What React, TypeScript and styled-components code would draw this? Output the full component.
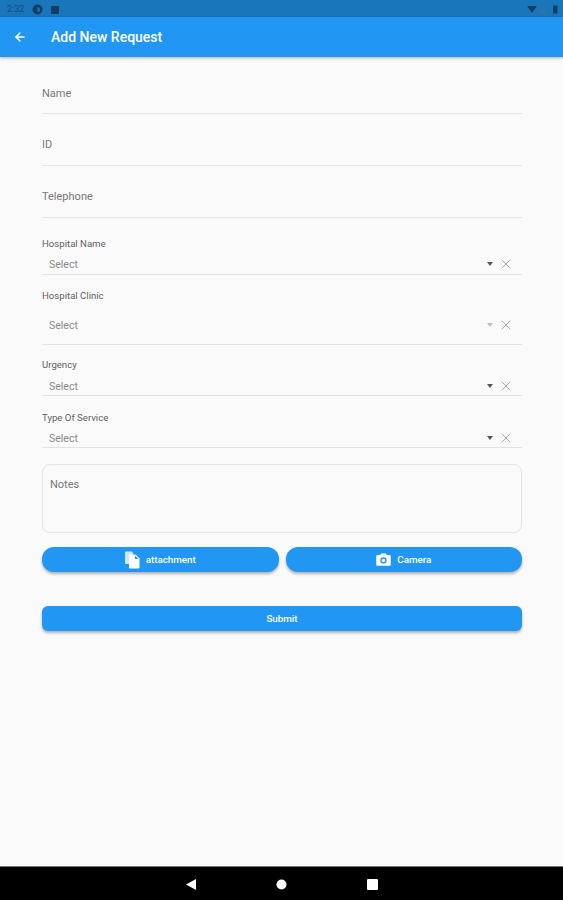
import React from "react";
import styled, { createGlobalStyle } from "styled-components";
import { ArrowLeft, X } from "lucide-react";

const GlobalStyle = createGlobalStyle`
	html, body {
		margin: 0;
		padding: 0;
		background: #fafafa;
	}
	* {
		box-sizing: border-box;
	}
`;

const Screen = styled.div`
	width: 563px;
	height: 900px;
	display: flex;
	flex-direction: column;
	background: #fafafa;
	font-family: Roboto, "Liberation Sans", sans-serif;
	overflow: hidden;
`;

const StatusBar = styled.div`
	height: 17px;
	flex: none;
	display: flex;
	align-items: center;
	justify-content: space-between;
	padding: 1px 5px 0 7px;
	background: #1a76bb;
`;

const StatusGroup = styled.div`
	display: flex;
	align-items: center;
	gap: 8px;
`;

const Clock = styled.span`
	font-size: 9px;
	color: #174a75;
`;

const AppBar = styled.header`
	height: 40px;
	flex: none;
	display: flex;
	align-items: center;
	padding: 0 0 1px 13px;
	background: #2196f3;
	color: #fff;
	box-shadow: 0 1px 3px rgba(0, 0, 0, 0.3);
	position: relative;
`;

const Title = styled.h1`
	margin: 0 0 0 24px;
	font-size: 14px;
	font-weight: 500;
`;

const Form = styled.main`
	flex: 1;
	padding: 0 41px 0 42px;
	display: flex;
	flex-direction: column;
`;

const TextField = styled.div<{ $first?: boolean }>`
	height: ${p => (p.$first ? 57 : 52)}px;
	padding-top: ${p => (p.$first ? 30 : 24)}px;
	border-bottom: 1px solid #e6e6e6;
	font-size: 11px;
	line-height: 13px;
	color: #777;
`;

const SelectField = styled.div<{ $top: number }>`
	margin-top: ${p => p.$top}px;
`;

const SelectLabel = styled.div`
	font-size: 9.6px;
	line-height: 11px;
	color: #616161;
`;

const SelectRow = styled.div<{ $height: number; $pad: number }>`
	height: ${p => p.$height}px;
	display: flex;
	align-items: center;
	padding: ${p => p.$pad}px 9px 0 7px;
	border-bottom: 1px solid #e2e2e2;
`;

const SelectText = styled.span`
	flex: 1;
	font-size: 10.5px;
	color: #8a8a8a;
`;

const Caret = styled.span<{ $disabled?: boolean }>`
	width: 0;
	height: 0;
	border-left: 3.5px solid transparent;
	border-right: 3.5px solid transparent;
	border-top: 4px solid ${p => (p.$disabled ? "#bdbdbd" : "#555")};
	margin-right: 5px;
`;

const ClearIcon = styled(X)`
	color: #a8a8a8;
	margin-right: -1px;
`;

const NotesBox = styled.div`
	height: 69px;
	margin-top: 16px;
	padding: 13px 7px;
	border: 1px solid #e4e4e4;
	border-radius: 8px;
	font-size: 11px;
	line-height: 13px;
	color: #777;
`;

const ButtonRow = styled.div`
	display: grid;
	grid-template-columns: 1fr 1fr;
	gap: 7px;
	margin-top: 14px;
`;

const PillButton = styled.button<{ $radius: number }>`
	height: 25px;
	display: flex;
	align-items: center;
	justify-content: center;
	gap: 6px;
	padding: 0;
	border: none;
	border-radius: ${p => p.$radius}px;
	background: #2196f3;
	color: #fff;
	font-family: inherit;
	font-size: 9.8px;
	font-weight: 500;
	box-shadow: 0 2px 3px rgba(0, 0, 0, 0.3);
`;

const SubmitButton = styled(PillButton)`
	width: 100%;
	margin-top: 34px;
`;

const NavBar = styled.nav`
	height: 34px;
	flex: none;
	display: flex;
	align-items: center;
	justify-content: center;
	gap: 80px;
	padding-top: 1px;
	background: #000;
	border-top: 1px solid #777;
`;

const NavIcon = styled.svg`
	display: block;
	fill: #fff;
`;

const CameraIcon = () => (
	<svg width="15" height="13" viewBox="0 0 16 14">
		<path
			fill="#fff"
			d="M5.5 0.5h5l1.2 1.7H14.5a1.3 1.3 0 0 1 1.3 1.3v9a1.3 1.3 0 0 1-1.3 1.3h-13A1.3 1.3 0 0 1 .2 12.5v-9a1.3 1.3 0 0 1 1.3-1.3h2.8z"
		/>
		<circle cx="8" cy="8" r="3.4" fill="#2196f3" />
		<circle cx="8" cy="8" r="1.9" fill="#fff" />
	</svg>
);

const FilesIcon = () => (
	<svg width="15" height="18" viewBox="0 0 15 18">
		<path fill="#cfe6fb" d="M1 0.5h6l1 1.5v11H1a1 1 0 0 1-1-1V1.5a1 1 0 0 1 1-1z" />
		<path fill="#fff" d="M5 3.5h5.5l4 4v9a1 1 0 0 1-1 1H5a1 1 0 0 1-1-1v-12a1 1 0 0 1 1-1z" />
		<path fill="#2196f3" d="M10 4.5v3.5h3.5z" />
	</svg>
);

const selects = [
	{ label: "Hospital Name", top: 20, height: 26, pad: 5 },
	{ label: "Hospital Clinic", top: 15, height: 44, pad: 5, disabled: true },
	{ label: "Urgency", top: 14, height: 26, pad: 7 },
	{ label: "Type Of Service", top: 16, height: 25, pad: 6 },
];

const App = () => {
	return (
		<Screen>
			<GlobalStyle />
			<StatusBar>
				<StatusGroup>
					<Clock>2:32</Clock>
					<svg width="11" height="11" viewBox="0 0 11 11">
						<circle cx="5.5" cy="5.5" r="5" fill="#0f3f66" />
						<path d="M5.5 3a2.5 2.5 0 0 1 0 5z" fill="#1a76bb" />
					</svg>
					<svg width="8" height="9" viewBox="0 0 8 9">
						<path d="M0 1h8v8H0z" fill="#0f3f66" />
					</svg>
				</StatusGroup>
				<svg width="31" height="9" viewBox="0 0 31 9">
					<path d="M0 1h10L5 8z" fill="#0f3f66" />
					<path d="M18 1v7h-6z" fill="#3f6f96" />
					<path d="M26 0.5h4.5v8H26z" fill="#0f3f66" />
				</svg>
			</StatusBar>
			<AppBar>
				<ArrowLeft size={14} strokeWidth={2.5} />
				<Title>Add New Request</Title>
			</AppBar>
			<Form>
				<TextField $first>Name</TextField>
				<TextField>ID</TextField>
				<TextField>Telephone</TextField>
				{selects.map(s => (
					<SelectField key={s.label} $top={s.top}>
						<SelectLabel>{s.label}</SelectLabel>
						<SelectRow $height={s.height} $pad={s.pad}>
							<SelectText>Select</SelectText>
							<Caret $disabled={s.disabled} />
							<ClearIcon size={16} strokeWidth={1.5} />
						</SelectRow>
					</SelectField>
				))}
				<NotesBox>Notes</NotesBox>
				<ButtonRow>
					<PillButton $radius={12}>
						<FilesIcon />
						attachment
					</PillButton>
					<PillButton $radius={12}>
						<CameraIcon />
						Camera
					</PillButton>
				</ButtonRow>
				<SubmitButton $radius={6}>Submit</SubmitButton>
			</Form>
			<NavBar>
				<NavIcon width="10" height="11" viewBox="0 0 10 11">
					<path d="M10 0v11L0 5.5z" />
				</NavIcon>
				<NavIcon width="11" height="11" viewBox="0 0 11 11">
					<circle cx="5.5" cy="5.5" r="5" />
				</NavIcon>
				<NavIcon width="11" height="11" viewBox="0 0 11 11">
					<rect x="0" y="0" width="11" height="11" rx="1" />
				</NavIcon>
			</NavBar>
		</Screen>
	);
};

export default App;
